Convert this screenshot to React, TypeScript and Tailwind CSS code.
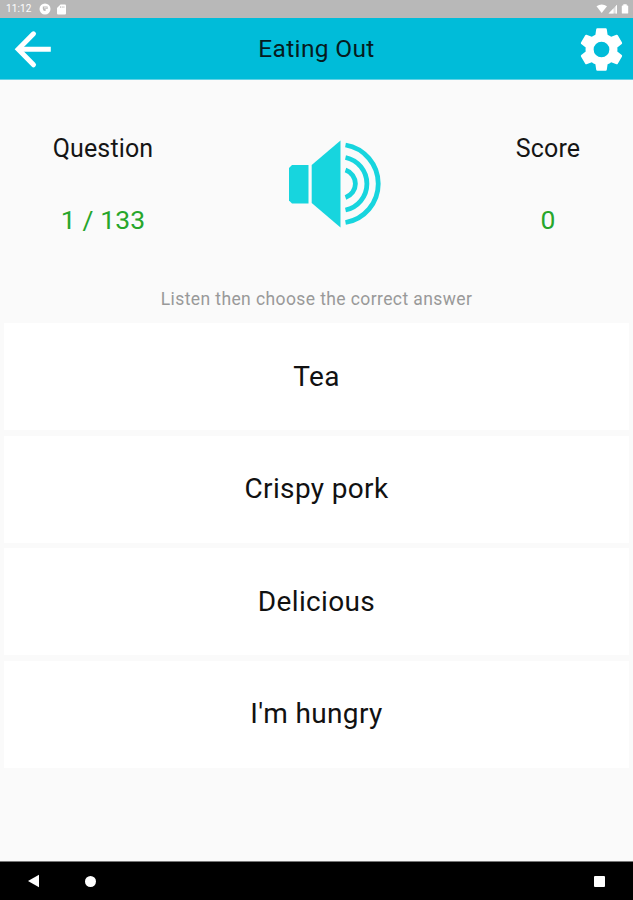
const answers = ["Tea", "Crispy pork", "Delicious", "I'm hungry"];

function StatusBar() {
  return (
    <div className="flex h-[18px] items-center justify-between bg-[#b8b8b8] pl-[6px] text-white">
      <div className="flex items-center">
        <span className="w-[25px] text-[10px] leading-[18px] tracking-[0.1px]">11:12</span>
        <svg className="ml-[8px] h-[12px] w-[12px]" viewBox="0 0 12 12">
          <circle cx="6" cy="6" r="5.5" fill="#fff" />
          <path d="M3.800 3.600h4.800v2.400H6.600v2A2.400 2.400 0 0 1 3.800 5.800z" fill="#b8b8b8" />
          <path d="M5 4.500h2.800v.8H5z" fill="#fff" />
        </svg>
        <svg className="ml-[6px] h-[11px] w-[10px]" viewBox="0 0 10 11">
          <path d="M3.500.500H8a1 1 0 0 1 1 1v8a1 1 0 0 1-1 1H1a1 1 0 0 1-1-1V4z" fill="#fff" />
          <path d="M3.500 2.200v1.800M5.200 2.200v1.800M6.900 2.200v1.800" stroke="#b8b8b8" strokeWidth=".7" />
        </svg>
      </div>
      <svg className="h-[18px] w-[40px]" viewBox="0 0 40 18" fill="#fff">
        <path d="M3.500 6.200Q8.700 2.800 14 6.200L8.700 13z" />
        <path d="M15.500 13.500L24 4.800v8.700z" opacity=".55" />
        <path d="M15.500 13.500L20.500 8.400v5.100zM22.600 6.200L24 4.800v8.700h-1.400z" />
        <path d="M30.300 4.200h3.400v1.200h.8a.7.7 0 0 1 .7.700v6.800a.7.7 0 0 1-.7.700h-5a.7.7 0 0 1-.7-.7V6.100a.7.7 0 0 1 .7-.7h.8z" />
      </svg>
    </div>
  );
}

function Header() {
  return (
    <header className="flex h-[62px] items-center justify-between border-b border-[#62d2e5] bg-[#00bcd9] pr-[6px] pl-[12px]">
      <button type="button" aria-label="Back" className="w-[45px]">
        <svg className="block h-[42px] w-[42px]" viewBox="0 0 42 42" fill="none" stroke="#fff" strokeWidth="5">
          <path d="M21.500 5.800L6.200 21.300l15.300 15.500" strokeLinecap="round" />
          <path d="M6 21.300h32.800" />
        </svg>
      </button>
      <h1 className="pt-[1px] text-[24.5px] leading-none tracking-[0.35px] text-[#061b20]">Eating Out</h1>
      <button type="button" aria-label="Settings">
        <svg className="mt-[1px] block h-[51px] w-[51px]" viewBox="0 0 24 24" fill="#fff">
          <path d="M19.430 12.980c.04-.32.070-.64.070-.98s-.03-.66-.07-.98l2.110-1.650c.19-.15.240-.42.120-.64l-2-3.460c-.12-.22-.39-.3-.61-.22l-2.490 1c-.52-.4-1.080-.73-1.690-.98l-.38-2.650C14.460 2.180 14.250 2 14 2h-4c-.25 0-.46.180-.49.420l-.38 2.650c-.61.250-1.170.590-1.690.980l-2.490-1c-.23-.09-.49 0-.61.220l-2 3.460c-.13.220-.07.490.120.640l2.110 1.650c-.04.320-.07.650-.07.980s.030.660.070.980l-2.110 1.650c-.19.150-.24.420-.12.640l2 3.460c.12.220.390.300.610.220l2.490-1c.52.400 1.080.730 1.690.980l.38 2.650c.03.240.240.420.490.420h4c.25 0 .46-.18.490-.42l.38-2.650c.61-.25 1.170-.59 1.690-.98l2.490 1c.23.090.490 0 .61-.22l2-3.460c.12-.22.070-.49-.12-.64zM12 15.700A3.700 3.700 0 1 1 12 8.300a3.700 3.700 0 0 1 0 7.400z" />
        </svg>
      </button>
    </header>
  );
}

function Stat({ label, value }: { label: string; value: string }) {
  return (
    <div className="flex flex-col items-center whitespace-nowrap">
      <span className="text-[25px] leading-[30px] tracking-[0.15px] text-[#151515]">{label}</span>
      <span className="mt-[40px] text-[26.5px] leading-[32px] tracking-[0.1px] text-[#27a62b]">{value}</span>
    </div>
  );
}

function Speaker() {
  return (
    <svg className="mt-[5px] block h-[90px] w-[96px]" viewBox="0 0 96 90">
      <path d="M5 26h16.500v38.500H5l-3-3V29z" fill="#17d5de" />
      <path d="M24.700 26L53.500 1.500v87L24.700 64z" fill="#17d5de" />
      <g fill="none" stroke="#17d5de" strokeWidth="4.800">
        <path d="M58.500 31a14.500 14.500 0 0 1 0 27.500" />
        <path d="M58.500 18.500a26.800 26.800 0 0 1 0 52.500" />
        <path d="M58.500 6a39.300 39.300 0 0 1 0 77.500" />
      </g>
    </svg>
  );
}

function NavBar() {
  return (
    <div className="flex h-[39px] items-center border-t border-[#777] bg-black pr-[28px] pl-[28px]">
      <svg className="h-[14px] w-[12px]" viewBox="0 0 12 14" fill="#fff">
        <path d="M0 7L11 .8v12.400z" />
      </svg>
      <span className="ml-[45px] h-[11px] w-[11px] rounded-full bg-white" />
      <span className="ml-auto h-[11px] w-[11px] rounded-[1px] bg-white" />
    </div>
  );
}

export default function App() {
  return (
    <div className="flex h-[900px] w-[633px] flex-col bg-[#fafafa] font-['Roboto',sans-serif]">
      <StatusBar />
      <Header />
      <main className="flex flex-1 flex-col">
        <section className="grid h-[205px] grid-cols-[206px_1fr_170px] pt-[54px]">
          <Stat label="Question" value="1 / 133" />
          <div className="flex justify-center">
            <button type="button" aria-label="Play" className="self-start">
              <Speaker />
            </button>
          </div>
          <Stat label="Score" value="0" />
        </section>
        <p className="h-[38px] pt-[4px] text-center text-[17.5px] leading-[20px] tracking-[0.4px] text-[#999]">
          Listen then choose the correct answer
        </p>
        <div className="flex flex-col gap-[5.5px] px-[4px]">
          {answers.map((answer) => (
            <button
              key={answer}
              type="button"
              className="h-[107px] bg-white text-[28px] leading-none tracking-[0.35px] text-[#111]"
            >
              {answer}
            </button>
          ))}
        </div>
      </main>
      <NavBar />
    </div>
  );
}
